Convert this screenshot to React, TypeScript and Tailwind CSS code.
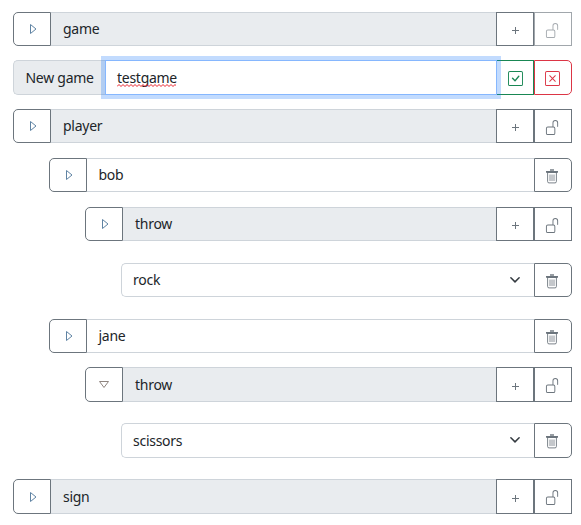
import React from "react";
import { BsUnlock, BsCheckSquare, BsXSquare } from "react-icons/bs";

type Tone = "slate" | "faded" | "green" | "red";

const tones: Record<Tone, string> = {
  slate: "border-[#6c757d] text-[#6c757d]",
  faded: "border-[#a1a7ac] text-[#a6abb0]",
  green: "border-[#198754] text-[#198754]",
  red: "border-[#dc3545] text-[#dc3545]",
};

function Cell({ tone = "slate", className = "w-[38px]", label, children }: { tone?: Tone; className?: string; label: string; children: React.ReactNode }) {
  return (
    <button aria-label={label} className={`flex shrink-0 items-center justify-center border bg-white ${tones[tone]} ${className}`}>
      {children}
    </button>
  );
}

function Toggle({ open }: { open?: boolean }) {
  return (
    <Cell label="Toggle" className="w-[38px] rounded-l-[5px]">
      {open ? (
        <svg width="12" height="10" viewBox="0 0 12 10" fill="none" stroke="#8f8580">
          <path d="M1.5 1.5h9L6 7.5z" />
        </svg>
      ) : (
        <svg width="10" height="12" viewBox="0 0 10 12" fill="none" stroke="#5f83a3" className="ml-[2px]">
          <path d="M2.5 1.5v9L8 6z" />
        </svg>
      )}
    </Cell>
  );
}

function Plus() {
  return (
    <Cell label="Add">
      <svg width="9" height="9" viewBox="0 0 9 9" className="mt-[3px]" stroke="currentColor">
        <path d="M1 4.5h7M4.5 1v7" />
      </svg>
    </Cell>
  );
}

function Bin() {
  return (
    <svg width="14" height="15" viewBox="0 0 14 15" fill="none" stroke="currentColor" className="mt-[2px] mr-[2px]">
      <path d="M5 1h4" strokeWidth="1.4" />
      <path d="M1 2.5h12M1.5 2.5v1h11v-1" />
      <path d="M2.6 3.5v9q0 1.4 1.4 1.4h6q1.4 0 1.4-1.4v-9" strokeWidth="0.9" />
      <path d="M5 5.5v6.5M7 5.5v6.5M9 5.5v6.5" strokeWidth="0.8" />
    </svg>
  );
}

function Group({ name, indent, height, open, faded }: { name: string; indent: string; height: string; open?: boolean; faded?: boolean }) {
  return (
    <div className={`flex ${indent} ${height}`}>
      <Toggle open={open} />
      <div className="flex grow items-center border-y border-[#ced4da] bg-[#e9ecef] pl-3">{name}</div>
      <Plus />
      <Cell label="Unlock" tone={faded ? "faded" : "slate"}>
        <BsUnlock size={15} className="mt-[2px] mr-px" />
      </Cell>
    </div>
  );
}

function Item({ name }: { name: string }) {
  return (
    <div className="ml-9 flex h-[34px]">
      <Toggle />
      <div className="flex grow items-center border-y border-[#ced4da] pl-[11.5px]">{name}</div>
      <Cell label="Delete" className="w-[38px] rounded-r-[5px]">
        <Bin />
      </Cell>
    </div>
  );
}

function Choice({ name, height }: { name: string; height: string }) {
  return (
    <div className={`ml-[108px] flex ${height}`}>
      <div className="flex grow items-center justify-between rounded-l-[5px] border border-r-0 border-[#ced4da] pr-[13px] pl-[11px]">
        {name}
        <svg width="12" height="12" viewBox="0 0 16 16" fill="none" stroke="#343a40" strokeWidth="2" strokeLinecap="round" strokeLinejoin="round" className="mb-px">
          <path d="m2.5 5 5.5 5.500L13.500 5" />
        </svg>
      </div>
      <Cell label="Delete" className="w-[38px] rounded-r-[5px]">
        <Bin />
      </Cell>
    </div>
  );
}

export default function App() {
  return (
    <main className="flex h-[525px] w-[581px] flex-col bg-white pt-3 pr-[9px] pl-[13px] font-['Noto_Sans',sans-serif] text-[14px] leading-5 tracking-[-0.27px] text-[#212529]">
      <Group name="game" indent="ml-0" height="h-[34px]" faded />
      <div className="mt-3.5 flex h-[35px]">
        <div className="flex w-[92px] shrink-0 items-center rounded-l-[5px] border border-r-0 border-[#ced4da] bg-[#e9ecef] pt-px pl-[11.5px] whitespace-nowrap">New game</div>
        <div className="z-10 flex grow items-center border border-[#86b7fe] bg-white pt-px pl-[11px] shadow-[0_0_0_4px_rgba(13,110,253,0.25)]">
          <span className="relative">
            testgame
            <svg width="59" height="3" viewBox="0 0 59 3" fill="none" stroke="#e8202a" className="absolute bottom-[1px] left-0">
              <path d="M0 2.500l2-2 2 2 2-2 2 2 2-2 2 2 2-2 2 2 2-2 2 2 2-2 2 2 2-2 2 2 2-2 2 2 2-2 2 2 2-2 2 2 2-2 2 2 2-2 2 2 2-2 2 2 2-2 2 2 2-2 2 2 2-2 1 1" />
            </svg>
          </span>
        </div>
        <Cell label="Confirm" tone="green" className="w-[37px] border-l-0">
          <BsCheckSquare size={15} className="mt-[2px]" />
        </Cell>
        <Cell label="Cancel" tone="red" className="w-[38px] rounded-r-[5px]">
          <BsXSquare size={15} className="mt-[2px] mr-px" />
        </Cell>
      </div>
      <div className="mt-3.5">
        <Group name="player" indent="ml-0" height="h-[34px]" />
      </div>
      <div className="mt-[15px]">
        <Item name="bob" />
      </div>
      <div className="mt-[15px]">
        <Group name="throw" indent="ml-[72px]" height="h-[34px]" />
      </div>
      <div className="mt-[22px]">
        <Choice name="rock" height="h-[34px]" />
      </div>
      <div className="mt-[22px]">
        <Item name="jane" />
      </div>
      <div className="mt-3.5">
        <Group name="throw" indent="ml-[72px]" height="h-[35px]" open />
      </div>
      <div className="mt-[21px]">
        <Choice name="scissors" height="h-[35px]" />
      </div>
      <div className="mt-[21px]">
        <Group name="sign" indent="ml-0" height="h-[35px]" />
      </div>
    </main>
  );
}
